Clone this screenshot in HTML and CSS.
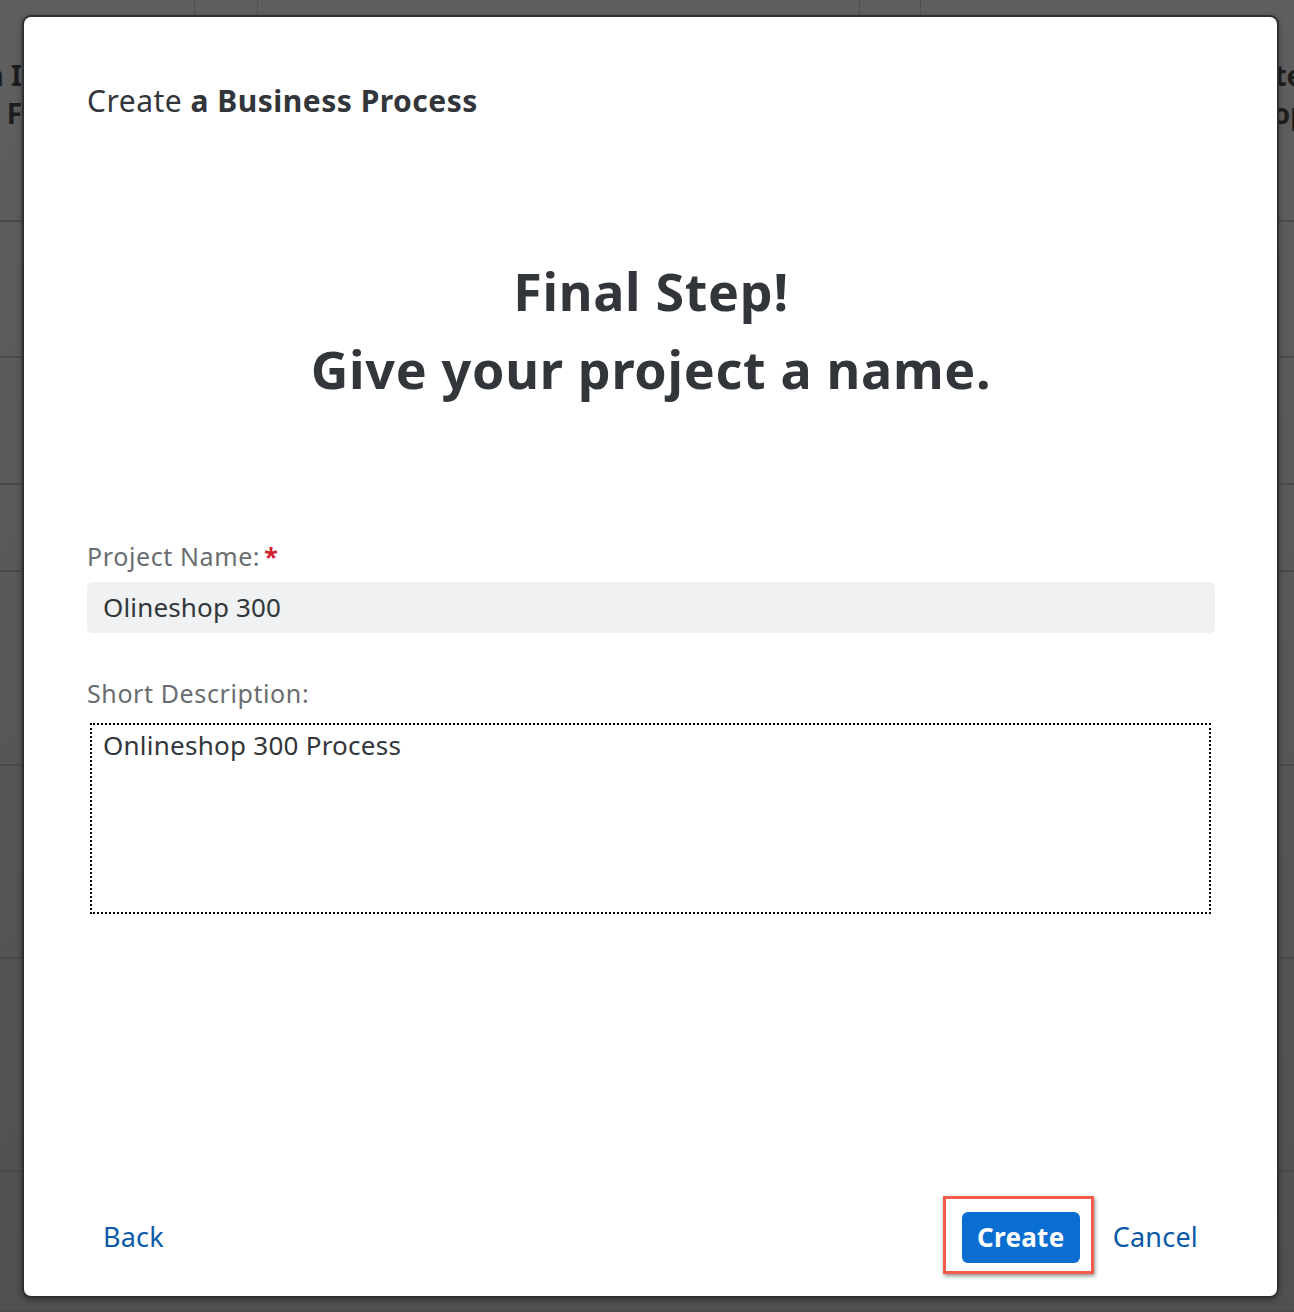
FILE: index.html
```html
<!DOCTYPE html>
<html lang="en">
<head>
<meta charset="utf-8">
<title>Create a Business Process</title>
<link rel="stylesheet" href="styles.css">
</head>
<body>
<div class="bg">
  <div class="bg-row bg-row-head">
    <div class="bg-cell bg-c1"><span class="bg-text bg-left">Design I<br>Model F</span></div>
    <div class="bg-cell bg-c2"></div>
    <div class="bg-cell bg-c3"></div>
    <div class="bg-cell bg-c4"></div>
    <div class="bg-cell bg-c5"><span class="bg-text bg-right">Create<br><span class="bg-shift">Shop</span></span></div>
  </div>
  <div class="bg-row r2"></div>
  <div class="bg-row r3"></div>
  <div class="bg-row r4"></div>
  <div class="bg-row r5"></div>
  <div class="bg-row r6"></div>
  <div class="bg-row r7"></div>
  <div class="bg-row r8"></div>
</div>

<div class="dialog" role="dialog">
  <header class="dlg-header">
    <h1 class="dlg-title">Create <strong>a Business Process</strong></h1>
  </header>
  <main class="dlg-body">
    <h2 class="step-heading">Final Step!<br>Give your project a name.</h2>
    <div class="field">
      <label class="field-label">Project Name:<span class="req">*</span></label>
      <div class="input">Olineshop 300</div>
    </div>
    <div class="field field-desc">
      <label class="field-label">Short Description:</label>
      <div class="textarea">Onlineshop 300 Process</div>
    </div>
  </main>
  <footer class="dlg-footer">
    <span class="link">Back</span>
    <div class="actions">
      <span class="btn-primary">Create</span>
      <span class="link">Cancel</span>
    </div>
  </footer>
</div>
</body>
</html>
```
FILE: styles.css
```css
* { box-sizing: border-box; }
html, body { margin: 0; padding: 0; }
body {
  width: 1294px;
  height: 1312px;
  overflow: hidden;
  position: relative;
  background: linear-gradient(#5f5f5f, #505050);
  font-family: "Noto Sans", "Open Sans", sans-serif;
}
.bg { display: flex; flex-direction: column; }
.bg-row { border-bottom: 2px solid #4a4a4a; }
.bg-row-head { height: 222px; display: flex; }
.bg-cell { height: 100%; border-right: 1px solid #505050; position: relative; overflow: hidden; }
.bg-c1 { width: 195px; }
.bg-c2 { width: 63px; }
.bg-c3 { width: 602px; }
.bg-c4 { width: 61px; }
.bg-c5 { flex: 1; border-right: none; }
.bg-text {
  position: absolute;
  top: 56px;
  font-weight: 700;
  font-size: 28px;
  line-height: 38px;
  color: #1d1d1d;
  white-space: nowrap;
}
.bg-left { right: 172px; text-align: right; }
.bg-right { left: 290px; }
.bg-shift { margin-left: 28px; }
.r2 { height: 136px; }
.r3 { height: 127px; }
.r4 { height: 87px; }
.r5 { height: 194px; }
.r6 { height: 193px; }
.r7 { height: 213px; }
.r8 { height: 140px; }

.dialog {
  position: absolute;
  left: 22px;
  top: 15px;
  width: 1257px;
  height: 1283px;
  background: #fff;
  border: 2px solid #2f2f2f;
  border-radius: 9px;
  box-shadow: 0 2px 6px rgba(0,0,0,0.35);
  display: flex;
  flex-direction: column;
  color: #32363a;
}
.dlg-header { padding: 64px 62px 0 63px; }
.dlg-title {
  margin: 0;
  font-size: 30px;
  line-height: 40px;
  letter-spacing: 0.5px;
  font-weight: 400;
  color: #32363a;
}
.dlg-title strong { font-weight: 700; }
.dlg-body { flex: 1; padding: 0 62px 0 63px; display: flex; flex-direction: column; }
.step-heading {
  margin: 131px 0 0;
  text-align: center;
  font-size: 52px;
  line-height: 78px;
  letter-spacing: 0.7px;
  font-weight: 700;
  color: #32363a;
}
.field { display: flex; flex-direction: column; margin-top: 132px; }
.field-desc { margin-top: 44px; }
.field-label {
  font-size: 25px;
  line-height: 32px;
  letter-spacing: 0.6px;
  color: #6a6d70;
}
.req { color: #d32030; font-weight: 700; margin-left: 4px; }
.input {
  margin-top: 10px;
  height: 51px;
  background: #eff1f2;
  border-radius: 5px;
  padding: 0 16px;
  font-size: 26px;
  line-height: 51px;
  letter-spacing: 0.15px;
  color: #32363a;
}
.textarea {
  margin: 14px 4px 0 3px;
  height: 191px;
  border: 2px dotted #000;
  padding: 3px 11px;
  font-size: 26px;
  line-height: 34px;
  letter-spacing: 0.25px;
  color: #32363a;
}
.dlg-footer {
  height: 118px;
  padding: 0 79px 0 79px;
  display: flex;
  align-items: center;
  justify-content: space-between;
}
.link { color: #0b5aa8; font-size: 27px; line-height: 36px; letter-spacing: 0.2px; }
.actions { display: flex; align-items: center; gap: 33px; }
.btn-primary {
  position: relative;
  width: 118px;
  height: 51px;
  border-radius: 6px;
  background: #0a6ed1;
  color: #fff;
  font-weight: 700;
  font-size: 26px;
  line-height: 51px;
  letter-spacing: 0.3px;
  text-align: center;
}
.btn-primary::after {
  content: "";
  position: absolute;
  left: -19px;
  top: -16px;
  right: -14px;
  bottom: -11px;
  border: 3px solid #f45b4b;
  box-shadow: 1px 2px 4px rgba(0,0,0,0.45);
}
```
